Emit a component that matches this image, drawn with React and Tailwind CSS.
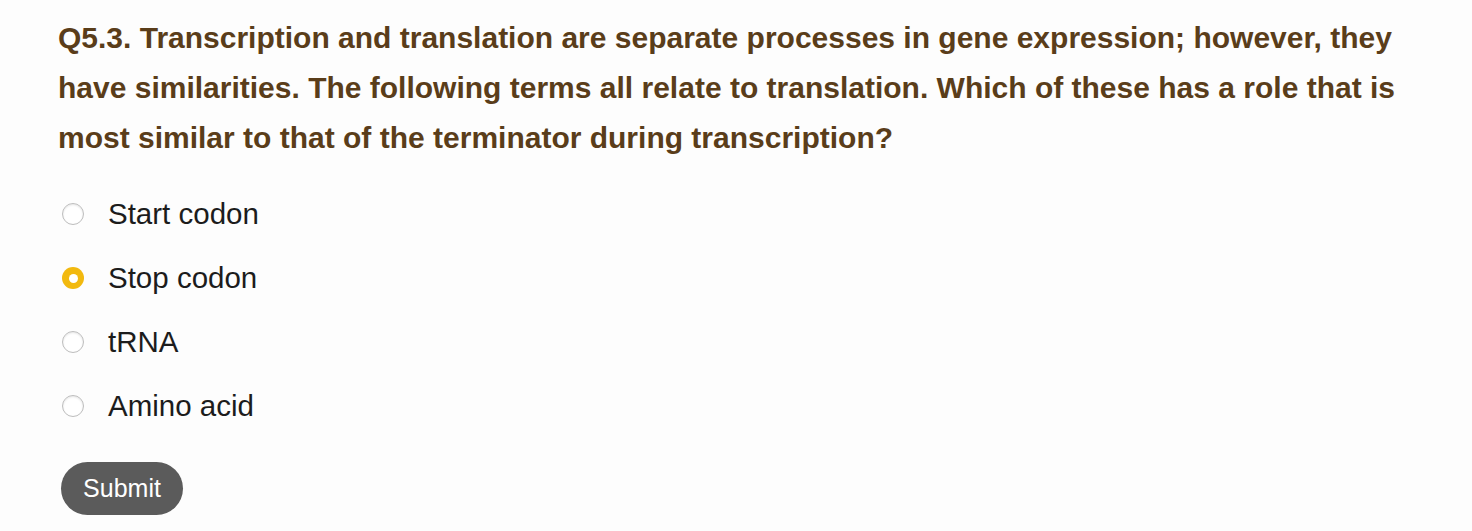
import React, { useState } from 'react';

const options = ['Start codon', 'Stop codon', 'tRNA', 'Amino acid'];

const App = () => {
  const [selected, setSelected] = useState('Stop codon');

  return (
    <div className="min-h-screen bg-[#fdfdfd] px-[58px] pt-[13px]" style={{ fontFamily: '"Liberation Sans", Arial, sans-serif' }}>
      {/* Question */}
      <p className="text-[30px] leading-[50px] font-bold text-[#5a3d1a] max-w-[1345px]">
        Q5.3. Transcription and translation are separate processes in gene expression; however, they have similarities. The following terms all relate to translation. Which of these has a role that is most similar to that of the terminator during transcription?
      </p>

      {/* Options */}
      <div className="mt-[34px] flex flex-col gap-[30px]">
        {options.map((opt) => {
          const checked = selected === opt;
          return (
            <label key={opt} className="flex items-center h-[34px] cursor-pointer" onClick={() => setSelected(opt)}>
              <span className="w-[50px] flex justify-start pl-[4px]">
                {checked ? (
                  <span className="w-[22px] h-[22px] rounded-full bg-[#f2b90f] flex items-center justify-center">
                    <span className="w-[9px] h-[9px] rounded-full bg-white"></span>
                  </span>
                ) : (
                  <span className="w-[22px] h-[22px] rounded-full bg-white border border-[#bdbdbd] shadow-[inset_0_1px_2px_rgba(0,0,0,0.1)]"></span>
                )}
              </span>
              <span className="text-[29.5px] text-[#1c1c1c]">{opt}</span>
            </label>
          );
        })}
      </div>

      {/* Submit */}
      <button className="mt-[39px] ml-[3px] h-[53px] w-[122px] rounded-full bg-[#5b5b5b] text-white text-[25px]">
        Submit
      </button>
    </div>
  );
};

export default App;
